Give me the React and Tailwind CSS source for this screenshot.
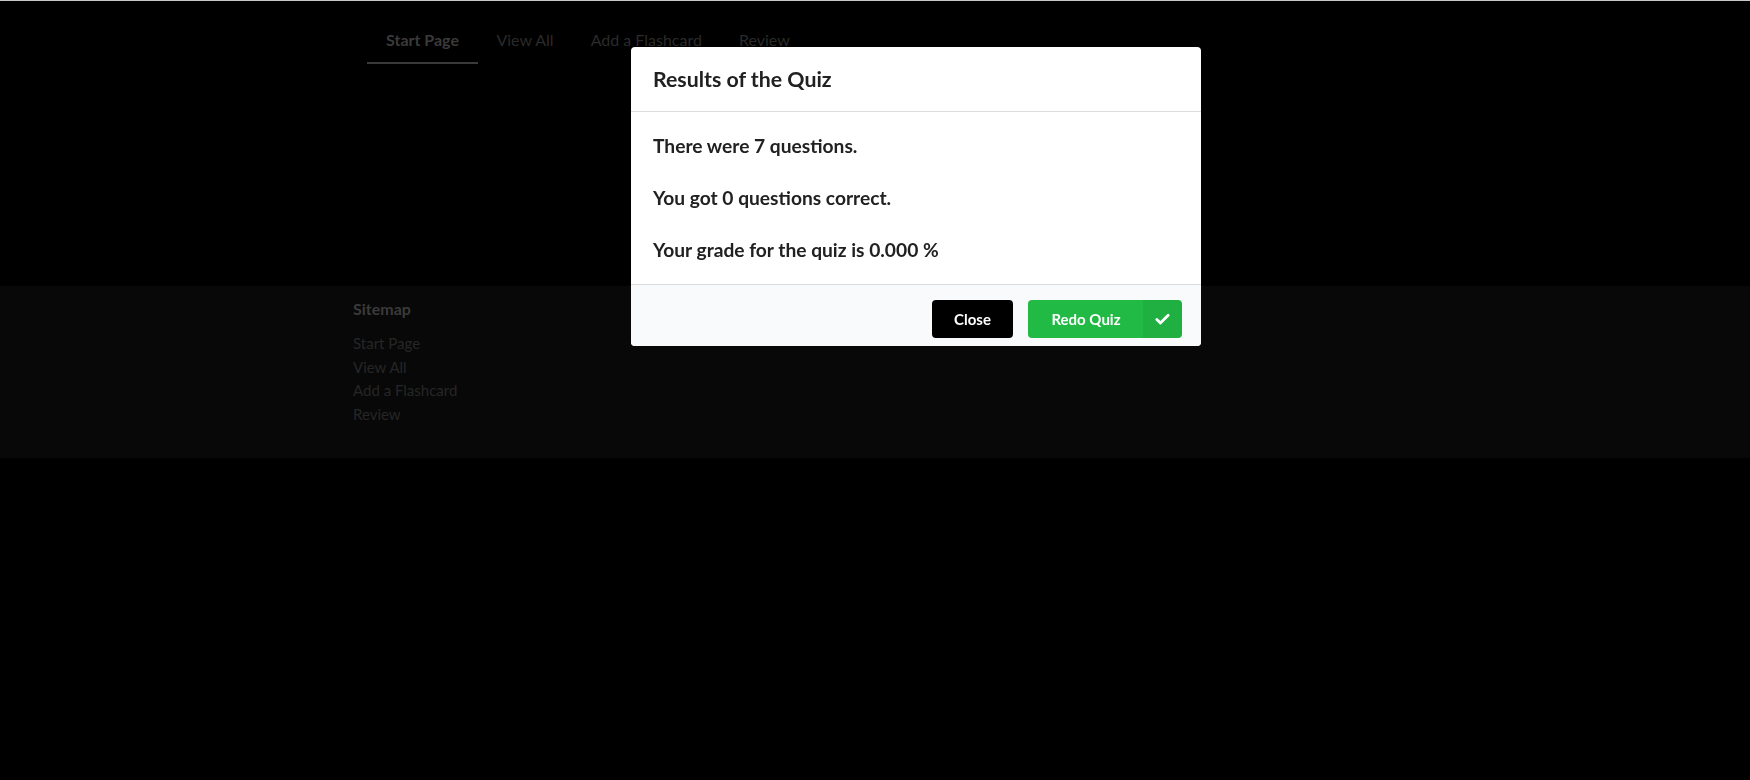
import { Check } from 'lucide-react';

const navLinks = ['Start Page', 'View All', 'Add a Flashcard', 'Review'];

function ResultsModal() {
  return (
    <div className="fixed left-[631px] top-[47px] w-[570px] rounded-[4px] bg-white text-[#212121] overflow-hidden">
      <div className="h-[65px] flex items-center pt-[2px] px-[22px] border-b border-[#dcdcdc] text-[21.3px] font-bold">
        Results of the Quiz
      </div>
      <div className="px-[22px] pt-[21px] pb-[21px] flex flex-col gap-[26px] text-[19.2px] font-bold leading-[26px]">
        <p>There were 7 questions.</p>
        <p>You got 0 questions correct.</p>
        <p>Your grade for the quiz is 0.000 %</p>
      </div>
      <div className="bg-[#f9fafb] border-t border-[#dcdcdc] pt-[15px] pb-[8px] pr-[19px] flex justify-end gap-[15px] text-[15px] font-bold">
        <button className="h-[38px] w-[81px] rounded-[4px] bg-[#000] text-white">Close</button>
        <button className="h-[38px] w-[154px] rounded-[4px] bg-[#21ba45] text-white flex overflow-hidden">
          <span className="flex-1 flex items-center justify-center pl-[1px]">Redo Quiz</span>
          <span className="w-[39px] flex items-center justify-center bg-black/5">
            <Check size={17} strokeWidth={4} />
          </span>
        </button>
      </div>
    </div>
  );
}

export default function App() {
  return (
    <div className="min-h-[780px] bg-black font-['Lato',sans-serif]">
      <div className="h-px bg-[#c8c8c8]" />
      <nav className="h-[285px] pl-[367px] pt-[27px]">
        <div className="flex text-[16px]">
          {navLinks.map((l, i) => (
            <span
              key={l}
              className={
                i === 0
                  ? 'px-[19px] pb-[10px] border-b-2 border-[#3a3a3a] text-[#3a3a3a] font-bold'
                  : 'px-[18.5px] pb-[10px] text-[#2a2a2a]'
              }
            >
              {l}
            </span>
          ))}
        </div>
      </nav>
      <footer className="h-[172px] bg-[#080808] pl-[353px] pt-[11px]">
        <h4 className="text-[16px] font-bold text-[#3a3a3a] mb-[11px]">Sitemap</h4>
        <ul className="text-[15px] text-[#262626] leading-[23.5px]">
          {navLinks.map(l => (
            <li key={l}>{l}</li>
          ))}
        </ul>
      </footer>
      <ResultsModal />
    </div>
  );
}
